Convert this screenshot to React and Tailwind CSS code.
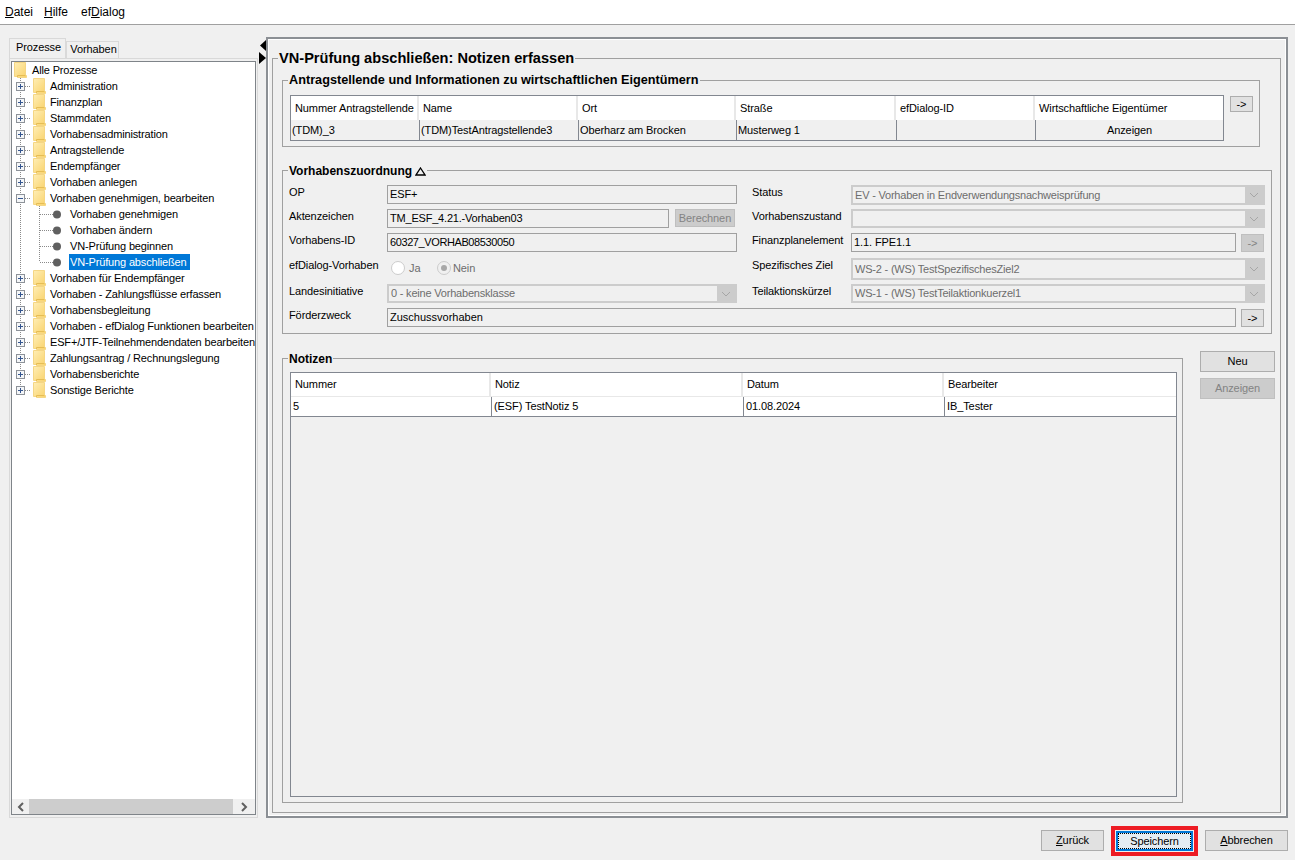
import React from 'react';

const topItemsA = ['Administration', 'Finanzplan', 'Stammdaten', 'Vorhabensadministration', 'Antragstellende', 'Endempfänger', 'Vorhaben anlegen'];
const leaves = ['Vorhaben genehmigen', 'Vorhaben ändern', 'VN-Prüfung beginnen', 'VN-Prüfung abschließen'];
const topItemsB = ['Vorhaben für Endempfänger', 'Vorhaben - Zahlungsflüsse erfassen', 'Vorhabensbegleitung', 'Vorhaben - efDialog Funktionen bearbeiten', 'ESF+/JTF-Teilnehmendendaten bearbeiten', 'Zahlungsantrag / Rechnungslegung', 'Vorhabensberichte', 'Sonstige Berichte'];

function Folder() {
  return (
    <svg width="13" height="16" viewBox="0 0 13 16" className="flex-shrink-0">
      <defs>
        <linearGradient id="fold" x1="0" y1="0" x2="1" y2="1">
          <stop offset="0" stopColor="#ffeeb5" />
          <stop offset="1" stopColor="#f9d26a" />
        </linearGradient>
      </defs>
      <path d="M0.5 0.5H11.5V13.5H12.5V15.5H3.5V14.5H0.5Z" fill="url(#fold)" stroke="#f5d684" strokeWidth="1" />
      <path d="M11.5 13.5H3.5V15" fill="none" stroke="#e6bd55" strokeWidth="1" />
    </svg>
  );
}

function TreeConnector({ open, last }) {
  return (
    <svg width="21" height="16" viewBox="0 0 21 16" className="flex-shrink-0">
      <path d={last ? 'M8.5 0V8' : 'M8.5 0V16'} stroke="#8a8a8a" strokeDasharray="1 1" />
      <path d="M13 8.5H19" stroke="#8a8a8a" strokeDasharray="1 1" />
      <rect x="4.5" y="4.5" width="8" height="8" fill="#f4f6f8" stroke="#8d9299" />
      <path d="M6 8.5H11" stroke="#34558f" />
      {!open && <path d="M8.5 6V11" stroke="#34558f" />}
    </svg>
  );
}

function TopRow({ label, open, last }) {
  return (
    <div className="flex h-4 items-center whitespace-nowrap">
      <TreeConnector open={open} last={last} />
      <Folder />
      <span className="ml-[4px]">{label}</span>
    </div>
  );
}

function LeafRow({ label, last, selected }) {
  return (
    <div className="flex h-4 items-center whitespace-nowrap">
      <svg width="57" height="16" viewBox="0 0 57 16" className="flex-shrink-0">
        <path d="M8.5 0V16" stroke="#8a8a8a" strokeDasharray="1 1" />
        <path d={last ? 'M27.5 0V8' : 'M27.5 0V16'} stroke="#8a8a8a" strokeDasharray="1 1" />
        <path d="M28 8.5H41" stroke="#8a8a8a" strokeDasharray="1 1" />
        <circle cx="45" cy="8.5" r="4" fill="#606060" />
      </svg>
      <span className={selected ? 'flex h-4 items-center bg-[#0078d7] pl-[1px] pr-[3px] text-white' : 'pl-[1px]'}>{label}</span>
    </div>
  );
}

function Tree() {
  return (
    <div className="flex min-h-0 flex-1 flex-col overflow-hidden border border-[#7f8489] bg-white text-[11px] tracking-[-0.15px] text-black">
      <div className="min-h-0 flex-1 overflow-hidden">
        <div className="flex h-4 items-center pl-[2px]">
          <Folder />
          <span className="ml-[5px]">Alle Prozesse</span>
        </div>
        {topItemsA.map(item => <TopRow key={item} label={item} />)}
        <TopRow label="Vorhaben genehmigen, bearbeiten" open />
        {leaves.map((item, i) => <LeafRow key={item} label={item} last={i === 3} selected={i === 3} />)}
        {topItemsB.map((item, i) => <TopRow key={item} label={item} last={i === topItemsB.length - 1} />)}
      </div>
      {/* horizontal scrollbar */}
      <div className="flex h-[15px] flex-shrink-0 bg-[#f0f0f0]">
        <div className="flex w-[17px] items-center justify-center">
          <svg width="8" height="10" viewBox="0 0 8 10"><path d="M6 1L2 5L6 9" fill="none" stroke="#606060" strokeWidth="2" /></svg>
        </div>
        <div className="w-[204px] bg-[#cdcdcd]" />
        <div className="flex flex-1 items-center justify-center">
          <svg width="8" height="10" viewBox="0 0 8 10"><path d="M2 1L6 5L2 9" fill="none" stroke="#606060" strokeWidth="2" /></svg>
        </div>
      </div>
    </div>
  );
}

function Group({ title, className, children, titleClass = 'text-[12px] tracking-normal' }) {
  return (
    <div className={`box-border border border-[#a0a0a0] ${className}`}>
      <div className={`-mt-[8px] ml-[5px] flex h-4 w-fit items-center bg-[#f0f0f0] px-[1px] font-bold text-black ${titleClass}`}>
        {title}
      </div>
      {children}
    </div>
  );
}

function Field({ children, className = '' }) {
  return (
    <div className={`box-border flex h-[19px] items-center border border-[#a0a0a0] pl-[2px] whitespace-nowrap text-black ${className}`}>
      {children}
    </div>
  );
}

function DisabledSelect({ value, className = 'h-[19px]' }) {
  return (
    <div className={`box-border flex border-2 border-[#cccccc] bg-[#f0f0f0] ${className}`}>
      <div className="flex flex-1 items-center pl-[2px] tracking-[-0.2px] whitespace-nowrap text-[#6d6d6d]">{value}</div>
      <div className="flex w-[18px] items-center justify-center bg-[#cccccc]">
        <svg width="10" height="6" viewBox="0 0 10 6"><path d="M1 1L5 5L9 1" fill="none" stroke="#a6a6a6" /></svg>
      </div>
    </div>
  );
}

function Button({ children, disabled, className = '' }) {
  return (
    <div
      className={`box-border flex items-center justify-center border ${
        disabled ? 'border-[#bfbfbf] bg-[#cccccc] text-[#838383]' : 'border-[#adadad] bg-[#e1e1e1] text-black'
      } ${className}`}
    >
      {children}
    </div>
  );
}

function Radio({ checked }) {
  return (
    <div className={`box-border flex h-[14px] w-[14px] items-center justify-center rounded-full border border-[#cccccc] ${checked ? 'bg-[#f0f0f0]' : 'bg-white'}`}>
      {checked && <div className="h-[6px] w-[6px] rounded-full bg-[#a8a8a8]" />}
    </div>
  );
}

function Label({ children }) {
  return <div className="leading-[14px] whitespace-nowrap text-black">{children}</div>;
}

export default function App() {
  const applicantCols = ['Nummer Antragstellende', 'Name', 'Ort', 'Straße', 'efDialog-ID', 'Wirtschaftliche Eigentümer'];
  const noteCols = ['Nummer', 'Notiz', 'Datum', 'Bearbeiter'];
  const noteRow = ['5', '(ESF) TestNotiz 5', '01.08.2024', 'IB_Tester'];

  return (
    <div className="flex h-[860px] w-[1295px] flex-col overflow-hidden bg-[#f0f0f0] font-['Liberation_Sans',Arial,sans-serif] text-[11px] tracking-[-0.1px]">
      {/* Menu bar */}
      <div className="flex h-[25px] flex-shrink-0 items-center border-b border-[#a0a0a0] bg-white pl-[5px] text-[12px] tracking-normal text-black">
        <span className="w-[39px]"><u>D</u>atei</span>
        <span className="w-[37px]"><u>H</u>ilfe</span>
        <span>ef<u>D</u>ialog</span>
      </div>

      <div className="flex h-[793px] flex-shrink-0 pt-[12px]">
        {/* Left column with tabs and process tree */}
        <div className="ml-[9px] flex w-[249px] flex-shrink-0 flex-col pt-px">
          <div className="flex h-[20px] flex-shrink-0 items-end">
            <div className="box-border flex h-[20px] w-[57px] items-center justify-center border border-b-0 border-[#d9d9d9] bg-[#f0f0f0] pb-[2px] pl-[2px] text-black">Prozesse</div>
            <div className="box-border flex h-[17px] w-[53px] items-center justify-center border border-b-0 border-[#d9d9d9] bg-[#f0f0f0] pb-px pl-[2px] text-black">Vorhaben</div>
          </div>
          <div className="box-border flex min-h-0 flex-1 flex-col border border-[#d9d9d9] px-px pt-[2px] pb-[2px]">
            <Tree />
          </div>
        </div>

        {/* Splitter arrows */}
        <div className="flex w-[8px] flex-shrink-0 flex-col items-end pt-[3px]">
          <svg width="7" height="24" viewBox="0 0 7 24">
            <path d="M7 0V11L1 5.5Z" fill="#000" />
            <path d="M0 12V24L7 18Z" fill="#000" />
          </svg>
        </div>

        {/* Right panel */}
        <div className="box-border h-[781px] w-[1022px] flex-shrink-0 border-2 border-[#8b8f94]">
          <div className="box-border h-full border border-white pt-[18px] pr-[4px] pb-[2px] pl-[3px]">
            <Group title="VN-Prüfung abschließen: Notizen erfassen" titleClass="text-[14.6px] tracking-normal" className="h-[755px]">
              <div className="pl-[9px]">
                <Group title="Antragstellende und Informationen zu wirtschaftlichen Eigentümern" titleClass="text-[12.7px] tracking-normal" className="mt-[13px] h-[67px] w-[978px]">
                  <div className="mt-[6px] ml-[7px] flex items-start">
                    <div className="box-border w-[934px] border border-[#828790]">
                      <div className="grid h-[24px] grid-cols-[128px_159px_158px_160px_139px_1fr] bg-white">
                        {applicantCols.map(col => (
                          <div key={col} className="flex items-center border-r-2 border-[#e8e8e8] pl-[4px] whitespace-nowrap text-black last:border-r-0">{col}</div>
                        ))}
                      </div>
                      <div className="grid h-[20px] grid-cols-[128px_159px_158px_160px_139px_1fr]">
                        <div className="flex items-center pl-[1px]">(TDM)_3</div>
                        <div className="flex items-center border-l border-[#828790] pl-[1px]">(TDM)TestAntragstellende3</div>
                        <div className="flex items-center border-l border-[#828790] pl-[1px]">Oberharz am Brocken</div>
                        <div className="flex items-center border-l border-[#828790] pl-[1px]">Musterweg 1</div>
                        <div className="border-l border-[#828790]" />
                        <div className="flex items-center justify-center border-l border-[#828790]">Anzeigen</div>
                      </div>
                    </div>
                    <Button className="mt-px ml-[6px] h-[16px] w-[23px]">-&gt;</Button>
                  </div>
                </Group>

                <Group
                  title={
                    <span className="flex items-center gap-[3px]">
                      Vorhabenszuordnung
                      <svg width="11" height="9" viewBox="0 0 11 9"><path d="M5.5 1L10 8H1Z" fill="none" stroke="#000" strokeWidth="1.3" /></svg>
                    </span>
                  }
                  className="mt-[23px] h-[164px] w-[990px]"
                >
                  <div className="mt-[6px] ml-[6px] grid grid-cols-[98px_350px_15px_99px_414px] grid-rows-[24px_24px_25px_26px_24px_24px]">
                    <Label>OP</Label>
                    <Field className="pl-[1px]">ESF+</Field>
                    <div />
                    <Label>Status</Label>
                    <DisabledSelect value="EV - Vorhaben in Endverwendungsnachweisprüfung" className="h-[20px]" />

                    <Label>Aktenzeichen</Label>
                    <div className="flex">
                      <Field className="w-[282px] tracking-[-0.2px]">TM_ESF_4.21.-Vorhaben03</Field>
                      <Button disabled className="ml-[6px] h-[18px] w-[60px]">Berechnen</Button>
                    </div>
                    <div />
                    <Label>Vorhabenszustand</Label>
                    <DisabledSelect value="" />

                    <Label>Vorhabens-ID</Label>
                    <Field className="tracking-[-0.4px]">60327_VORHAB08530050</Field>
                    <div />
                    <Label>Finanzplanelement</Label>
                    <div className="flex">
                      <Field className="w-[385px]">1.1. FPE1.1</Field>
                      <Button disabled className="mt-px ml-[5px] h-[18px] w-[23px]">-&gt;</Button>
                    </div>

                    <Label>efDialog-Vorhaben</Label>
                    <div className="flex items-start pt-[3px] pl-[4px] text-[#6d6d6d]">
                      <Radio />
                      <span className="ml-[4px] w-[28px] leading-[14px]">Ja</span>
                      <Radio checked />
                      <span className="ml-[2px] leading-[14px]">Nein</span>
                    </div>
                    <div />
                    <Label>Spezifisches Ziel</Label>
                    <DisabledSelect value="WS-2 - (WS) TestSpezifischesZiel2" className="h-[22px]" />

                    <Label>Landesinitiative</Label>
                    <DisabledSelect value="0 - keine Vorhabensklasse" />
                    <div />
                    <Label>Teilaktionskürzel</Label>
                    <DisabledSelect value="WS-1 - (WS) TestTeilaktionkuerzel1" />

                    <Label>Förderzweck</Label>
                    <div className="col-span-4 flex">
                      <Field className="w-[849px] tracking-normal">Zuschussvorhaben</Field>
                      <Button className="mt-px ml-[5px] h-[18px] w-[23px]">-&gt;</Button>
                    </div>
                  </div>
                </Group>

                <div className="mt-[24px] flex items-start">
                  <Group title="Notizen" className="h-[445px] w-[901px]">
                    <div className="mt-[5px] ml-[7px] box-border h-[425px] w-[887px] border border-[#828790]">
                      <div className="grid h-[24px] grid-cols-[200px_252px_201px_1fr] bg-white">
                        {noteCols.map(col => (
                          <div key={col} className="flex items-center border-r-2 border-b border-[#e8e8e8] pl-[4px] text-black last:border-r-0">{col}</div>
                        ))}
                      </div>
                      <div className="grid h-[20px] grid-cols-[200px_252px_201px_1fr] border-b border-[#828790] bg-white">
                        {noteRow.map((cell, i) => (
                          <div key={cell} className={`flex items-center pl-[2px] text-black ${i > 0 ? 'border-l border-[#828790]' : ''}`}>{cell}</div>
                        ))}
                      </div>
                    </div>
                  </Group>
                  <div className="-mt-[7px] ml-[17px] flex w-[75px] flex-col gap-[6px]">
                    <Button className="h-[21px]">Neu</Button>
                    <Button disabled className="h-[21px]">Anzeigen</Button>
                  </div>
                </div>
              </div>
            </Group>
          </div>
        </div>
      </div>

      {/* Footer buttons */}
      <div className="flex flex-1 items-start justify-end gap-[7px] pt-[8px] pr-[7px]">
        <Button className="mt-[4px] h-[21px] w-[63px]"><span><u>Z</u>urück</span></Button>
        <div className="box-border h-[30px] w-[87px] border-[4px] border-[#ed1c24] bg-[#f0f0f0] p-px">
          <div className="box-border h-full border-2 border-[#0078d7] bg-[#e5edf3]">
            <div className="flex h-full items-center justify-center border border-dotted border-black text-black">Speichern</div>
          </div>
        </div>
        <Button className="mt-[4px] h-[21px] w-[83px]"><span><u>A</u>bbrechen</span></Button>
      </div>
    </div>
  );
}
